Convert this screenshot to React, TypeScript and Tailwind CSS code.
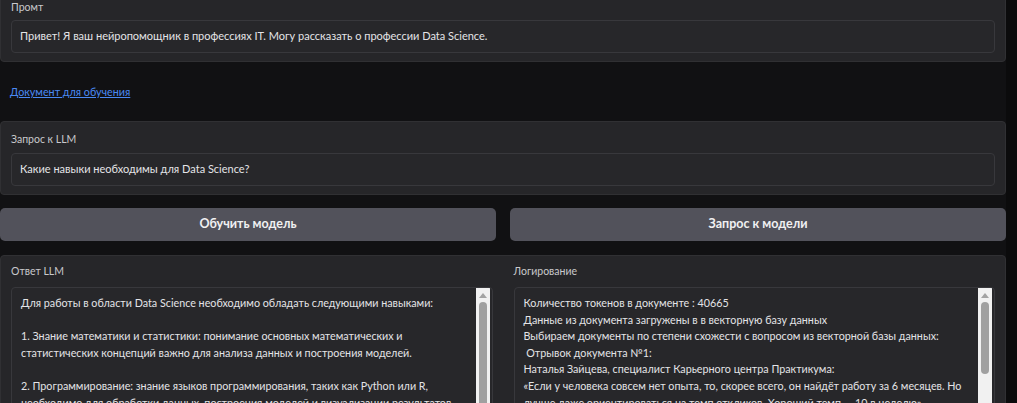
import React from "react";

const answerLines = [
  "Для работы в области Data Science необходимо обладать следующими навыками:",
  "",
  "1. Знание математики и статистики: понимание основных математических и",
  "статистических концепций важно для анализа данных и построения моделей.",
  "",
  "2. Программирование: знание языков программирования, таких как Python или R,",
  "необходимо для обработки данных, построения моделей и визуализации результатов.",
  "",
  "3. Машинное обучение: понимание алгоритмов машинного обучения.",
];

const logLines = [
  "Количество токенов в документе : 40665",
  "Данные из документа загружены в в векторную базу данных",
  "Выбираем документы по степени схожести с вопросом из векторной базы данных:",
  " Отрывок документа №1:",
  "Наталья Зайцева, специалист Карьерного центра Практикума:",
  "«Если у человека совсем нет опыта, то, скорее всего, он найдёт работу за 6 месяцев. Но",
  "лучше даже ориентироваться на темп откликов. Хороший темп — 10 в неделю».",
  "",
];

function Label({ children }: { children: React.ReactNode }) {
  return <div className="h-[14px] text-[10.5px] leading-[14px] text-[#c9c9cc]">{children}</div>;
}

function Field({ text }: { text: string }) {
  return (
    <div className="flex h-[33px] items-center rounded-[4px] border border-[#38383c] bg-[#27272a] px-[8px] text-[11px] text-[#e4e4e7]">
      {text}
    </div>
  );
}

function Scrollbar({ thumb }: { thumb: number }) {
  return (
    <div className="absolute top-0 right-[2px] flex h-full w-[14px] flex-col items-center bg-[#f1f1f1]">
      <div className="mt-[5px] h-0 w-0 border-x-[4px] border-b-[5px] border-x-transparent border-b-[#a3a3a3]" />
      <div className="mt-[4px] w-[8px] rounded-[4px] bg-[#a0a0a0]" style={{ height: thumb }} />
    </div>
  );
}

function Area({ lines, thumb }: { lines: string[]; thumb: number }) {
  return (
    <div className="relative mt-[9px] h-[140px] overflow-hidden rounded-[4px] border border-[#38383c] bg-[#27272a] pt-[7px] pl-[9px] text-[10.75px] leading-[16.6px] text-[#e4e4e7]">
      {lines.map((l, i) => (
        <div key={i} className="h-[16.6px] whitespace-pre">
          {l}
        </div>
      ))}
      <Scrollbar thumb={thumb} />
    </div>
  );
}

export default function App() {
  return (
    <div
      className="flex h-[403px] w-[1017px] overflow-hidden bg-[#111113]"
      style={{ fontFamily: "Lato, 'Noto Sans', sans-serif" }}
    >
      <div className="flex w-[1006px] flex-col">
        {/* Промт */}
        <div className="-mt-[12px] flex flex-col gap-[6px] rounded-[4px] border border-[#303033] bg-[#262629] px-[10px] pt-[11px] pb-[8px]">
          <Label>Промт</Label>
          <Field text="Привет! Я ваш нейропомощник в профессиях IT. Могу рассказать о профессии Data Science." />
        </div>

        <div className="mt-[22px] mb-[21px] h-[16px] px-[10px] text-[10.75px] leading-[16px]">
          <a href="#" className="text-[#4a8af4] underline">
            Документ для обучения
          </a>
        </div>

        {/* Запрос к LLM */}
        <div className="flex flex-col gap-[7px] rounded-[4px] border border-[#303033] bg-[#262629] px-[10px] pt-[10px] pb-[8px]">
          <Label>Запрос к LLM</Label>
          <Field text="Какие навыки необходимы для Data Science?" />
        </div>

        <div className="mt-[13px] grid grid-cols-2 gap-[14px]">
          <button className="h-[33px] rounded-[5px] bg-[#52525b] text-[12.5px] font-bold text-[#f0f0f2]">
            Обучить модель
          </button>
          <button className="h-[33px] rounded-[5px] bg-[#52525b] text-[12.5px] font-bold text-[#f0f0f2]">
            Запрос к модели
          </button>
        </div>

        <div className="mt-[14px] grid flex-1 grid-cols-2 gap-[21px] rounded-t-[4px] border border-[#303033] bg-[#262629] px-[10px] pt-[8px]">
          <div>
            <Label>Ответ LLM</Label>
            <Area lines={answerLines} thumb={130} />
          </div>
          <div>
            <Label>Логирование</Label>
            <Area lines={logLines} thumb={72} />
          </div>
        </div>
      </div>
      <div className="w-[11px] bg-[#0b0b0c]" />
    </div>
  );
}
